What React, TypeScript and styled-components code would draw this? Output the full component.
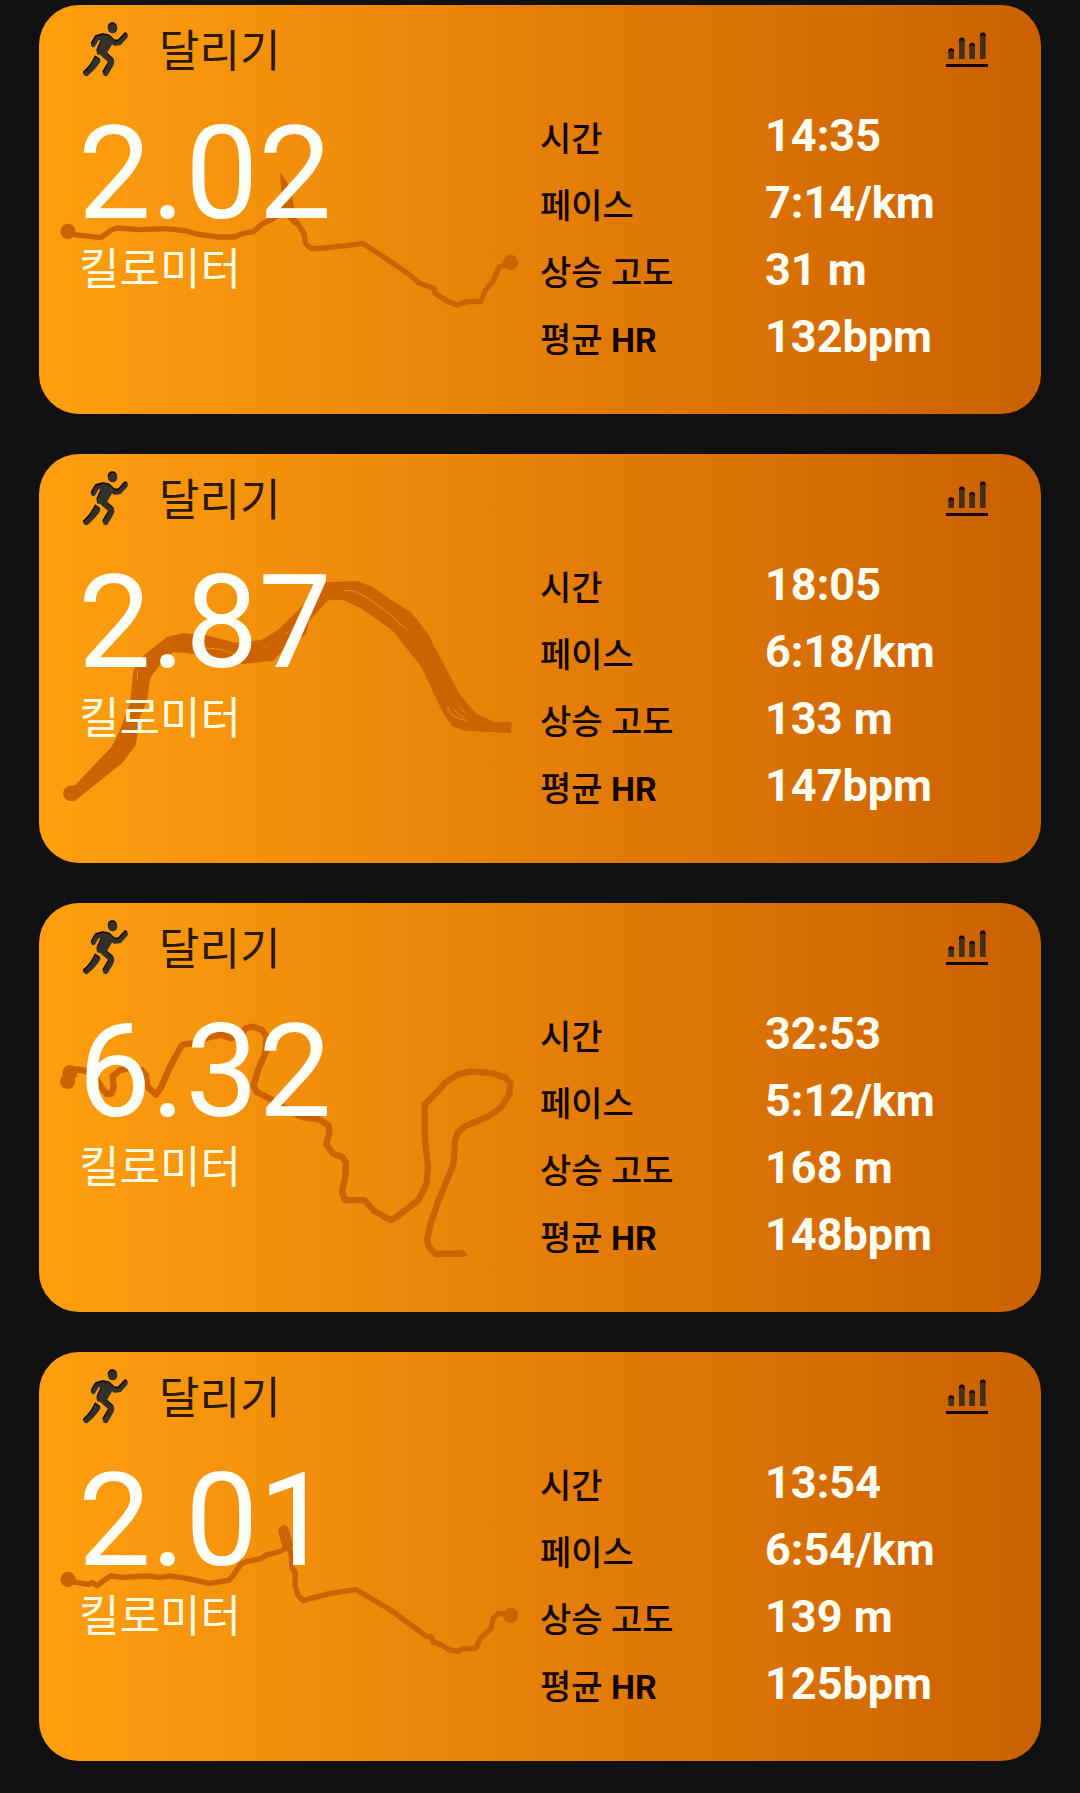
import React from 'react';
import styled, { createGlobalStyle } from 'styled-components';

const GlobalStyle = createGlobalStyle`
  * { box-sizing: border-box; }
  body {
    margin: 0;
    background: #111111;
    font-family: Roboto, "Noto Sans CJK KR", sans-serif;
  }
`;

const Feed = styled.main`
  display: flex;
  flex-direction: column;
  gap: 40px;
  padding: 5px 39px 32px;
`;

const Card = styled.article`
  position: relative;
  padding-bottom: 44px;
  border-radius: 40px;
  background: linear-gradient(to right, #ff9f0f, #cb6000);
  overflow: hidden;
`;

const Header = styled.header`
  display: flex;
  align-items: center;
  height: 92px;
  padding: 2px 53px 0 41px;
`;

const Title = styled.h2`
  flex: 1;
  margin: 0;
  padding-left: 29px;
  font-size: 44px;
  line-height: 56px;
  font-weight: 400;
  color: #2c1a06;
`;

const ChartButton = styled.button`
  display: flex;
  padding: 0;
  border: 0;
  background: none;
  cursor: pointer;
`;

const Body = styled.div`
  position: relative;
  display: grid;
  grid-template-columns: 1fr 1fr;
  padding-top: 5px;
`;

const Distance = styled.div`
  padding: 16px 0 0 39px;
  color: #fffffa;
`;

const DistanceValue = styled.div`
  font-size: 130px;
  line-height: 112px;
`;

const DistanceUnit = styled.div`
  margin-top: 12px;
  padding-left: 1px;
  font-size: 44px;
  line-height: 56px;
  font-weight: 400;
  color: #fffbe0;
`;

const Stats = styled.dl`
  margin: 0;
`;

const StatRow = styled.div`
  display: grid;
  grid-template-columns: 225px 1fr;
  align-items: baseline;
  height: 67px;
`;

const StatLabel = styled.dt`
  font-size: 34px;
  line-height: 67px;
  font-weight: 500;
  color: #140400;

  b {
    font-weight: 700;
  }
`;

const StatValue = styled.dd`
  margin: 0;
  font-size: 45px;
  line-height: 67px;
  font-weight: 700;
  color: #fffff4;
`;

const RouteSvg = styled.svg`
  position: absolute;
  top: 95px;
  left: 0;
  width: 50%;
  fill: none;
  stroke: #cc6200;
  stroke-width: 16;
  stroke-linejoin: round;
`;

const RouteFill = styled.path`
  fill: #cc6200;
  stroke: none;
`;

const RouteGap = styled.path`
  stroke: #f08f0b;
  stroke-width: 3;
`;

const RouteDot = styled.circle`
  fill: #cc6200;
  stroke: none;
`;

function RunnerFigure({ color }: { color: string }) {
  return (
    <g fill="none" stroke={color} strokeLinecap="round" strokeLinejoin="round">
      <circle cx="157" cy="48" r="14" fill={color} stroke="none" />
      <path d="M99 97 L110 78 L128 73 L144 76 L163 93 L178 91 L196 71" strokeWidth="13" />
      <path d="M122 76 L148 81 L154 92 L137 121 L113 124 L112 116 L124 88 Z" fill={color} strokeWidth="5" />
      <path d="M122 119 L153 146 Q155 149 153 153 L136 182" strokeWidth="16" />
      <path d="M105 133 L121 145 Q107 169 81 190 Q73 192 69 185 Q68 181 74 177 Q92 162 105 133 Z" fill={color} stroke="none" />
    </g>
  );
}

function RunnerIcon() {
  return (
    <svg width="50" height="60" viewBox="60 33 150 180" aria-hidden="true">
      <RunnerFigure color="#0a0200" />
      <g transform="translate(1 5)">
        <RunnerFigure color="#33312a" />
      </g>
    </svg>
  );
}

function ChartIcon() {
  const bars = [
    { x: 58, y: 82 },
    { x: 90, y: 50 },
    { x: 121, y: 66 },
    { x: 153, y: 35 },
  ];
  return (
    <svg width="42" height="42" viewBox="51 30 126 126" aria-hidden="true">
      {bars.map(({ x, y }) => (
        <g key={x}>
          <path d={`M${x} ${y + 14} v-6 a8.5 8.5 0 0 1 17 0 v6 z`} fill="#140300" />
          <path d={`M${x} 114 V${y + 16} a8.5 8.5 0 0 1 17 0 V114 z`} fill="#41301d" />
        </g>
      ))}
      <path d="M51 129 h126 v9 h-126 z" fill="#140300" />
    </svg>
  );
}

const routeOne = (
  <>
    <RouteDot cx="84" cy="394" r="23" />
    <path d="M84 398 L110 405 L183 413 L212 391 L232 384 L300 389 L372 386 L434 392 L470 402 L534 411 L582 411 L610 400 L640 395 L664 374 L700 355 L730 330" />
    <RouteFill d="M720 216 L742 248 L755 286 L762 318 L757 350 L776 364 L764 378 L742 356 L716 340 L730 300 L723 270 Z" />
    <path d="M755 350 L774 372 L792 401 L796 430 L813 446 L850 444 L920 437 L968 430 L1054 486 L1108 524 L1136 548 L1183 566 L1184 580 L1228 607 L1252 615 L1284 604 L1322 605 L1336 571 L1360 541 L1378 500 L1412 494" />
    <RouteDot cx="1412" cy="487" r="23" />
  </>
);

const routeTwo = (
  <g transform="translate(0 3)">
    <RouteDot cx="92" cy="730" r="23" />
    <RouteFill d="M92 708 L106 705 L215 590 L240 540 L270 460 L280 360 L312 315 L382 260 L430 249 L500 256 L585 278 L664 270 L714 240 L790 165 L850 97 L952 93 L1000 112 L1050 148 L1110 185 L1134 212 L1166 256 L1257 430 L1308 491 L1364 516 L1415 516 L1413 549 L1274 542 L1237 529 L1211 493 L1144 350 L1056 240 L966 177 L910 150 L864 151 L808 212 L798 252 L742 288 L700 332 L610 342 L526 322 L440 309 L400 307 L366 337 L330 384 L322 450 L300 500 L288 584 L246 640 L100 756 Z" />
    <RouteGap d="M292 362 L293 392 M496 294 L540 298 L586 312 M735 252 L745 246 M912 121 L942 123 L985 145 L1045 189 L1102 241 M676 292 h5 M1222 470 L1236 496 L1283 515 M1244 482 L1274 505 M1256 470 L1280 492" />
  </g>
);

const routeThree = (
  <g transform="translate(0 6)" strokeWidth="19">
    <RouteDot cx="90" cy="218" r="23" />
    <RouteDot cx="83" cy="244" r="23" />
    <path d="M90 213 L112 208 L134 212 L160 222 L184 262 L200 282 L214 282 L221 262 L218 228 L240 211 L270 204 L305 210 L318 226 L322 260 L348 284 L364 260 L388 204 L424 138 L434 132 L466 130 L504 112 L544 104 L574 115 L606 100 L618 84 L640 80 L666 90 L680 110 L676 160 L654 210 L640 258 L650 276 L694 298 L748 334 L790 352 L838 358 L866 376 L868 394 L859 434 L878 460 L908 472 L918 490 L916 530 L906 576 L914 600 L974 601 L1004 634 L1052 660 L1070 650 L1136 600 L1160 550 L1164 500 L1154 410 L1154 314 L1184 284 L1216 248 L1252 224 L1292 214 L1362 220 L1396 234 L1411 250 L1408 284 L1382 324 L1344 350 L1276 378 L1254 396 L1246 420 L1240 494 L1196 600 L1172 670 L1161 720 L1168 742 L1186 762 L1268 761" />
    <RouteFill d="M1250 753 L1271 749 L1284 767 L1271 771 L1250 770 Z" />
  </g>
);

const routeFour = (
  <g transform="translate(0 -21)">
    <RouteDot cx="84" cy="418" r="23" />
    <path d="M84 420 L108 427 L146 433 L155 427 L172 437 L188 424 L212 408 L250 412 L320 408 L360 412 L390 408 L440 415 L508 430 L566 421 L580 406 L602 373 L620 364 L664 356 L676 346 L720 334 L738 324" />
    <path d="M731 272 L742 316" strokeWidth="32" strokeLinecap="round" />
    <RouteGap d="M735 280 L739 300" strokeDasharray="3 4" />
    <path d="M745 322 L754 340 L756 382 L766 400 L765 436 L774 466 L789 482 L870 460 L948 449 L1052 510 L1160 590 L1174 590 L1180 606 L1198 612 L1230 630 L1256 634 L1268 625 L1304 626 L1312 618 L1318 598 L1354 564 L1360 534 L1376 521 L1412 520" />
    <RouteDot cx="1412" cy="526" r="23" />
  </g>
);

interface Run {
  distance: string;
  time: string;
  pace: string;
  climb: string;
  heartRate: string;
  route: React.ReactNode;
}

const runs: Run[] = [
  { distance: '2.02', time: '14:35', pace: '7:14/km', climb: '31 m', heartRate: '132bpm', route: routeOne },
  { distance: '2.87', time: '18:05', pace: '6:18/km', climb: '133 m', heartRate: '147bpm', route: routeTwo },
  { distance: '6.32', time: '32:53', pace: '5:12/km', climb: '168 m', heartRate: '148bpm', route: routeThree },
  { distance: '2.01', time: '13:54', pace: '6:54/km', climb: '139 m', heartRate: '125bpm', route: routeFour },
];

function Stat({ label, value }: { label: React.ReactNode; value: string }) {
  return (
    <StatRow>
      <StatLabel>{label}</StatLabel>
      <StatValue>{value}</StatValue>
    </StatRow>
  );
}

function RunCard({ run }: { run: Run }) {
  return (
    <Card>
      <RouteSvg viewBox="-3 0 1503 900" aria-hidden="true">{run.route}</RouteSvg>
      <Header>
        <RunnerIcon />
        <Title>달리기</Title>
        <ChartButton type="button" aria-label="통계">
          <ChartIcon />
        </ChartButton>
      </Header>
      <Body>
        <Distance>
          <DistanceValue>{run.distance}</DistanceValue>
          <DistanceUnit>킬로미터</DistanceUnit>
        </Distance>
        <Stats>
          <Stat label="시간" value={run.time} />
          <Stat label="페이스" value={run.pace} />
          <Stat label="상승 고도" value={run.climb} />
          <Stat label={<>평균 <b>HR</b></>} value={run.heartRate} />
        </Stats>
      </Body>
    </Card>
  );
}

export default function App() {
  return (
    <>
      <GlobalStyle />
      <Feed lang="ko">
        {runs.map((run) => (
          <RunCard key={run.distance} run={run} />
        ))}
      </Feed>
    </>
  );
}
